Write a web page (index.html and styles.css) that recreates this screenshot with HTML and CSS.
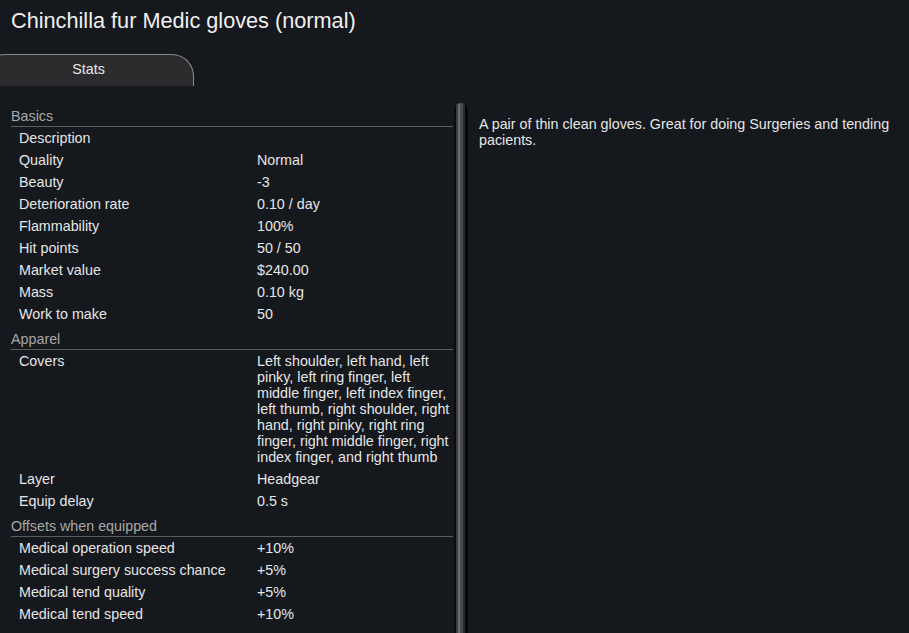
FILE: index.html
```html
<!DOCTYPE html>
<html>
<head>
<meta charset="utf-8">
<link rel="stylesheet" href="styles.css">
</head>
<body>
<div class="page">
  <h1 class="title">Chinchilla fur Medic gloves (normal)</h1>
  <div class="tabs"><div class="tab">Stats</div></div>
  <div class="content">
    <div class="stats">
      <div class="section">Basics</div>
      <div class="row"><span class="label">Description</span><span class="value"></span></div>
      <div class="row"><span class="label">Quality</span><span class="value">Normal</span></div>
      <div class="row"><span class="label">Beauty</span><span class="value">-3</span></div>
      <div class="row"><span class="label">Deterioration rate</span><span class="value">0.10 / day</span></div>
      <div class="row"><span class="label">Flammability</span><span class="value">100%</span></div>
      <div class="row"><span class="label">Hit points</span><span class="value">50 / 50</span></div>
      <div class="row"><span class="label">Market value</span><span class="value">$240.00</span></div>
      <div class="row"><span class="label">Mass</span><span class="value">0.10 kg</span></div>
      <div class="row"><span class="label">Work to make</span><span class="value">50</span></div>
      <div class="section">Apparel</div>
      <div class="row"><span class="label">Covers</span><span class="value">Left shoulder, left hand, left pinky, left ring finger, left middle finger, left index finger, left thumb, right shoulder, right hand, right pinky, right ring finger, right middle finger, right index finger, and right thumb</span></div>
      <div class="row"><span class="label">Layer</span><span class="value">Headgear</span></div>
      <div class="row"><span class="label">Equip delay</span><span class="value">0.5 s</span></div>
      <div class="section">Offsets when equipped</div>
      <div class="row"><span class="label">Medical operation speed</span><span class="value">+10%</span></div>
      <div class="row"><span class="label">Medical surgery success chance</span><span class="value">+5%</span></div>
      <div class="row"><span class="label">Medical tend quality</span><span class="value">+5%</span></div>
      <div class="row"><span class="label">Medical tend speed</span><span class="value">+10%</span></div>
    </div>
    <div class="scrollbar"><div class="thumb"></div></div>
    <div class="desc">A pair of thin clean gloves. Great for doing Surgeries and tending pacients.</div>
  </div>
</div>
</body>
</html>
```
FILE: styles.css
```css
html, body {
  margin: 0;
  padding: 0;
  background: #15181d;
  height: 100%;
  overflow: hidden;
}
.page {
  font-family: "Liberation Sans", Arial, sans-serif;
  color: #e6e6e6;
  font-size: 14.3px;
}
.title {
  margin: 0;
  padding: 8px 0 0 11px;
  font-size: 21.7px;
  font-weight: normal;
  line-height: 26px;
  color: #f0f0f0;
}
.tabs {
  margin-top: 20px;
  height: 32px;
  display: flex;
  overflow: hidden;
}
.tab {
  margin-left: -17px;
  width: 209px;
  height: 31px;
  flex: none;
  background: #2c2c2e;
  border-top: 1px solid #8a8a8a;
  border-right: 1px solid #8a8a8a;
  border-left: 1px solid #8a8a8a;
  border-radius: 22px 22px 0 0;
  text-align: center;
  line-height: 28px;
  color: #e8e8e8;
}
.content {
  display: flex;
  margin-top: 17px;
}
.stats {
  width: 442px;
  margin-left: 11px;
}
.section {
  margin-top: 4px;
  line-height: 20px;
  height: 20px;
  border-bottom: 1px solid #5a5c60;
  color: #a8a8a8;
}
.stats .section:first-child {
  margin-top: 3px;
}
.row {
  display: flex;
  padding: 3px 0;
  line-height: 16px;
}
.label {
  width: 238px;
  padding-left: 8px;
  flex: none;
}
.value {
  flex: 1;
}
.scrollbar {
  width: 14px;
  margin-left: 1px;
  height: 540px;
  flex: none;
}
.thumb {
  height: 100%;
  border-radius: 7px 7px 0 0;
  background: linear-gradient(to right, #0b0b0c 0, #0b0b0c 2px, #3c3d40 2px, #3c3d40 4px, #6a6b6e 4px, #6a6b6e 6px, #4a4b4e 6px, #4a4b4e 9px, #2a2b2e 9px, #2a2b2e 11px, #060607 11px);
}
.desc {
  margin-left: 11px;
  margin-top: 13px;
  width: 425px;
  line-height: 16px;
}
```
